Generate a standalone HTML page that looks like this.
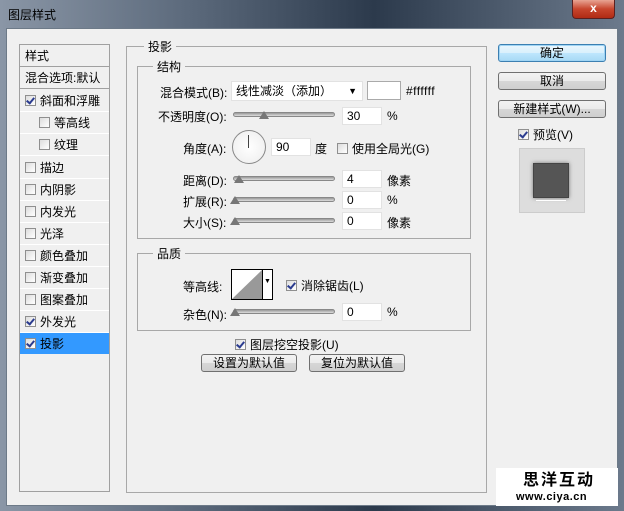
<!DOCTYPE html>
<html><head><meta charset="utf-8"><style>
*{margin:0;padding:0;box-sizing:border-box}
body{width:624px;height:511px;overflow:hidden;background:linear-gradient(90deg,#8a96a6 0%,#5c6a7c 30%,#2c3a4c 60%,#6c7a8c 100%);font-family:"Liberation Sans","Noto Sans CJK SC",sans-serif;font-size:12px;color:#000;position:relative}
.a{position:absolute;white-space:nowrap}
.title{left:8px;top:6px;font-size:12px;color:#000}
.client{left:6px;top:28px;width:612px;height:478px;background:#f0f0f0;border:1px solid #6d7a88}
.list{left:19px;top:44px;width:91px;height:448px;border:1px solid #a0a0a0;background:#f0f0f0}
.row{position:absolute;left:0;width:89px;height:22px;line-height:22px;border-bottom:1px solid #fff}
.cb{display:inline-block;width:11px;height:11px;border:1px solid #8f8f8f;background:linear-gradient(135deg,#ddd,#fff);vertical-align:-1px;margin-right:4px;position:relative}
.cb.on::after{content:"";position:absolute;left:2px;top:0px;width:3px;height:6px;border:solid #2a3b8f;border-width:0 2px 2px 0;transform:rotate(40deg)}
.box{position:absolute;border:1px solid #a8a8a8}
.leg{position:absolute;background:#f0f0f0;padding:0 4px}
.inp{position:absolute;height:18px;background:#fff;border:1px solid #e2e2e2;line-height:16px;padding-left:4px}
.sl{position:absolute;height:5px;border-radius:3px;background:linear-gradient(#999,#ddd);border:1px solid #888}
.th{position:absolute;width:0;height:0;border-left:5px solid transparent;border-right:5px solid transparent;border-bottom:8px solid #777}
.btn{position:absolute;height:18px;border:1px solid #707070;border-radius:3px;background:linear-gradient(#f2f2f2,#ebebeb 50%,#d6d6d6 51%,#cfcfcf);text-align:center;line-height:16px}
</style></head><body>
<div class="a title">图层样式</div>
<div class="a" style="left:572px;top:0;width:43px;height:19px;background:linear-gradient(#e8a493,#c7452d 50%,#b02a14);border:1px solid #5a2020;border-top:none;border-radius:0 0 4px 4px;color:#fff;text-align:center;font-weight:bold;line-height:17px">x</div>
<div class="a client"></div>
<div class="a list">
<div class="row" style="top:0;padding-left:5px;border-bottom:1px solid #a0a0a0">样式</div>
<div class="row" style="top:22px;padding-left:5px;border-bottom:1px solid #a0a0a0">混合选项:默认</div>
<div class="row" style="top:45px;padding-left:5px"><span class="cb on"></span>斜面和浮雕</div>
<div class="row" style="top:67px;padding-left:19px"><span class="cb"></span>等高线</div>
<div class="row" style="top:89px;padding-left:19px"><span class="cb"></span>纹理</div>
<div class="row" style="top:112px;padding-left:5px"><span class="cb"></span>描边</div>
<div class="row" style="top:134px;padding-left:5px"><span class="cb"></span>内阴影</div>
<div class="row" style="top:156px;padding-left:5px"><span class="cb"></span>内发光</div>
<div class="row" style="top:178px;padding-left:5px"><span class="cb"></span>光泽</div>
<div class="row" style="top:200px;padding-left:5px"><span class="cb"></span>颜色叠加</div>
<div class="row" style="top:222px;padding-left:5px"><span class="cb"></span>渐变叠加</div>
<div class="row" style="top:244px;padding-left:5px"><span class="cb"></span>图案叠加</div>
<div class="row" style="top:266px;padding-left:5px"><span class="cb on"></span>外发光</div>
<div class="row" style="top:288px;padding-left:5px;background:#3399ff;height:21px;border:none"><span class="cb on"></span>投影</div>
</div>

<div class="box" style="left:126px;top:46px;width:361px;height:447px"></div>
<div class="leg a" style="left:144px;top:38px">投影</div>
<div class="box" style="left:137px;top:66px;width:334px;height:173px"></div>
<div class="leg a" style="left:153px;top:58px">结构</div>

<div class="a" style="left:160px;top:84px">混合模式(B):</div>
<div class="inp" style="left:231px;top:81px;width:132px;height:20px;line-height:18px">线性减淡（添加）<span style="position:absolute;right:5px;top:0;font-size:9px">▼</span></div>
<div class="inp" style="left:367px;top:81px;width:34px;height:19px;border-color:#aaa"></div>
<div class="a" style="left:406px;top:84px;letter-spacing:0.5px">#ffffff</div>

<div class="a" style="left:158px;top:108px">不透明度(O):</div>
<div class="sl" style="left:233px;top:112px;width:102px"></div><div class="th" style="left:259px;top:111px"></div>
<div class="inp" style="left:342px;top:107px;width:40px">30</div><div class="a" style="left:387px;top:109px">%</div>

<div class="a" style="left:183px;top:140px">角度(A):</div>
<div class="a" style="left:232px;top:130px;width:34px;height:34px;border-radius:50%;border:1px solid #888;background:radial-gradient(#fff,#ececec)"></div>
<div class="a" style="left:248px;top:135px;width:1px;height:13px;background:#444"></div>
<div class="inp" style="left:271px;top:138px;width:40px">90</div><div class="a" style="left:315px;top:140px">度</div>
<div class="a" style="left:337px;top:140px"><span class="cb"></span>使用全局光(G)</div>

<div class="a" style="left:183px;top:172px">距离(D):</div>
<div class="sl" style="left:233px;top:176px;width:102px"></div><div class="th" style="left:234px;top:175px"></div>
<div class="inp" style="left:342px;top:170px;width:40px">4</div><div class="a" style="left:387px;top:172px">像素</div>
<div class="a" style="left:183px;top:193px">扩展(R):</div>
<div class="sl" style="left:233px;top:197px;width:102px"></div><div class="th" style="left:230px;top:196px"></div>
<div class="inp" style="left:342px;top:191px;width:40px">0</div><div class="a" style="left:387px;top:193px">%</div>
<div class="a" style="left:183px;top:214px">大小(S):</div>
<div class="sl" style="left:233px;top:218px;width:102px"></div><div class="th" style="left:230px;top:217px"></div>
<div class="inp" style="left:342px;top:212px;width:40px">0</div><div class="a" style="left:387px;top:214px">像素</div>

<div class="box" style="left:137px;top:253px;width:334px;height:78px"></div>
<div class="leg a" style="left:153px;top:245px">品质</div>
<div class="a" style="left:183px;top:278px">等高线:</div>
<div class="a" style="left:231px;top:269px;width:42px;height:31px;border:1px solid #000;background:#fff">
<svg width="30" height="29" style="position:absolute;left:0;top:0"><polygon points="0,29 30,0 30,29" fill="#999"/></svg>
<div style="position:absolute;left:30px;top:0;width:1px;height:29px;background:#000"></div>
<div style="position:absolute;left:32px;top:8px;font-size:7px">▼</div></div>
<div class="a" style="left:286px;top:277px"><span class="cb on"></span>消除锯齿(L)</div>
<div class="a" style="left:183px;top:306px">杂色(N):</div>
<div class="sl" style="left:233px;top:309px;width:102px"></div><div class="th" style="left:230px;top:308px"></div>
<div class="inp" style="left:342px;top:303px;width:40px">0</div><div class="a" style="left:387px;top:305px">%</div>

<div class="a" style="left:235px;top:336px"><span class="cb on"></span>图层挖空投影(U)</div>
<div class="btn" style="left:201px;top:354px;width:96px">设置为默认值</div>
<div class="btn" style="left:309px;top:354px;width:96px">复位为默认值</div>

<div class="btn" style="left:498px;top:44px;width:108px;border-color:#3c7fb1;box-shadow:0 0 0 1px #9fd4f4 inset;background:linear-gradient(#eaf6fd,#d9f0fc 50%,#bee6fd 51%,#a7d9f5)">确定</div>
<div class="btn" style="left:498px;top:72px;width:108px">取消</div>
<div class="btn" style="left:498px;top:100px;width:108px">新建样式(W)...</div>
<div class="a" style="left:518px;top:126px"><span class="cb on"></span>预览(V)</div>
<div class="a" style="left:519px;top:148px;width:66px;height:65px;background:#ddd;border:1px solid #ccc"></div>
<div class="a" style="left:533px;top:163px;width:36px;height:35px;background:#555;border:1px solid #444;box-shadow:0 0 4px #777"></div>
<div class="a" style="left:536px;top:200px;width:30px;height:1px;background:#fff"></div>

<div class="a" style="left:496px;top:468px;width:122px;height:38px;background:#fff"></div>
<div class="a" style="left:523px;top:472px;font-size:16px;line-height:17px;font-weight:bold;letter-spacing:2px">思洋互动</div>
<div class="a" style="left:516px;top:492px;font-size:11px;line-height:11px;font-weight:bold;letter-spacing:0.5px">www.ciya.cn</div>
</body></html>
